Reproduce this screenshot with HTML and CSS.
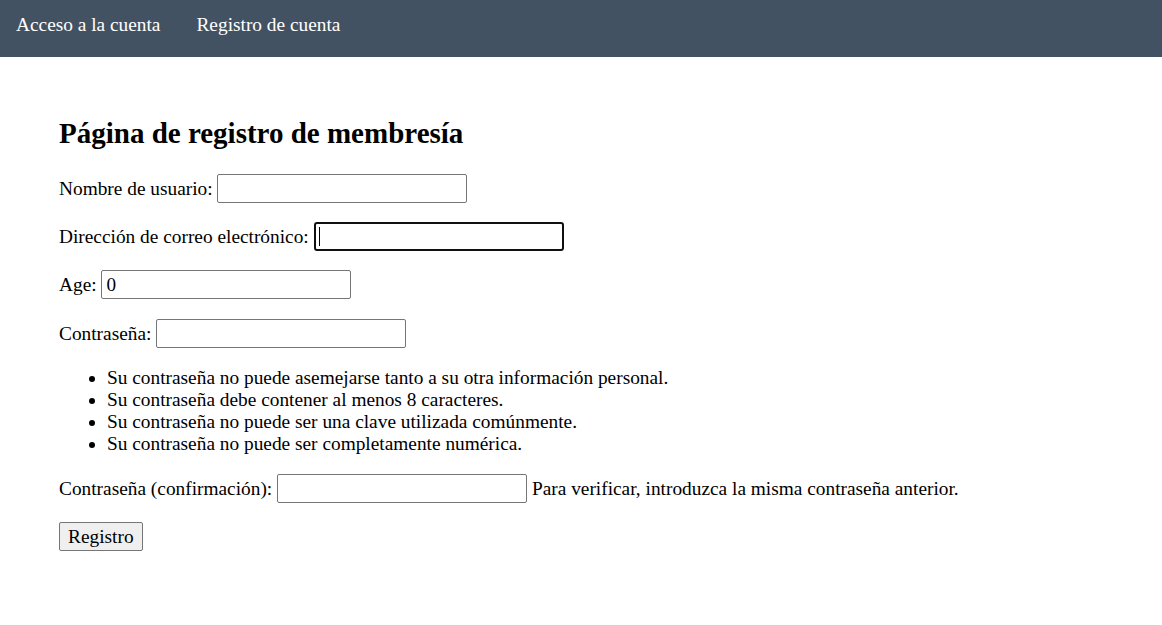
FILE: index.html
```html
<!DOCTYPE html>
<html lang="es">
<head>
<meta charset="utf-8">
<title>Registro</title>
<link rel="stylesheet" href="styles.css">
</head>
<body>
<nav class="topnav">
  <a class="navlink" href="#">Acceso a la cuenta</a>
  <a class="navlink" href="#">Registro de cuenta</a>
</nav>
<main class="content">
  <h2 class="title">Página de registro de membresía</h2>
  <form class="form">
    <p class="row"><label>Nombre de usuario:</label> <input class="field" type="text"></p>
    <p class="row"><label>Dirección de correo electrónico:</label> <span class="focuswrap"><input class="field focused" type="email"><span class="caret"></span></span></p>
    <p class="row"><label>Age:</label> <input class="field" type="text" value="0"></p>
    <p class="row"><label>Contraseña:</label> <input class="field" type="password"></p>
    <ul class="help">
      <li>Su contraseña no puede asemejarse tanto a su otra información personal.</li>
      <li>Su contraseña debe contener al menos 8 caracteres.</li>
      <li>Su contraseña no puede ser una clave utilizada comúnmente.</li>
      <li>Su contraseña no puede ser completamente numérica.</li>
    </ul>
    <p class="row"><label>Contraseña (confirmación):</label> <input class="field" type="password"> <span class="hint">Para verificar, introduzca la misma contraseña anterior.</span></p>
    <p class="row"><button class="btn" type="button">Registro</button></p>
  </form>
</main>
</body>
</html>
```

FILE: styles.css
```css
html, body {
  margin: 0;
  padding: 0;
  background: #ffffff;
}
body {
  font-family: "Liberation Serif", "Times New Roman", serif;
  font-size: 19.35px;
  color: #000000;
}
.topnav {
  background: #435263;
  height: 57px;
  box-sizing: border-box;
  padding: 14px 0 0 0;
  display: flex;
}
.navlink {
  color: #ffffff;
  text-decoration: none;
  padding: 0 16px;
  line-height: 22px;
}
.navlink + .navlink {
  margin-left: 4px;
}
.content {
  padding: 36px 0 0 59px;
}
.title {
  font-size: 29px;
  font-weight: bold;
  margin: 24px 0 24px 0;
  line-height: 33px;
}
.form {
  margin: 0;
}
.row {
  margin: 19.2px 0;
  line-height: 22px;
}
.title + .form .row:first-child {
  margin-top: 0;
}
.field {
  font-family: inherit;
  font-size: 19.2px;
  width: 250px;
  height: 29px;
  box-sizing: border-box;
  border: 1px solid #767676;
  border-radius: 2px;
  padding: 1px 4px;
  vertical-align: baseline;
  color: #000;
  background: #fff;
  outline: none;
}
.focuswrap {
  position: relative;
  display: inline-block;
}
.field.focused {
  border: 2px solid #101010;
  border-radius: 3px;
}
.caret {
  position: absolute;
  left: 5px;
  top: 5px;
  width: 1px;
  height: 19px;
  background: #000;
}
.help {
  margin: 19.2px 0;
  padding-left: 48px;
  line-height: 22px;
}
.btn {
  font-family: inherit;
  font-size: 19.35px;
  color: #000;
  background: #efefef;
  border: 1px solid #767676;
  border-radius: 2px;
  padding: 1px 8px;
  height: 29px;
  line-height: 22px;
}
```
